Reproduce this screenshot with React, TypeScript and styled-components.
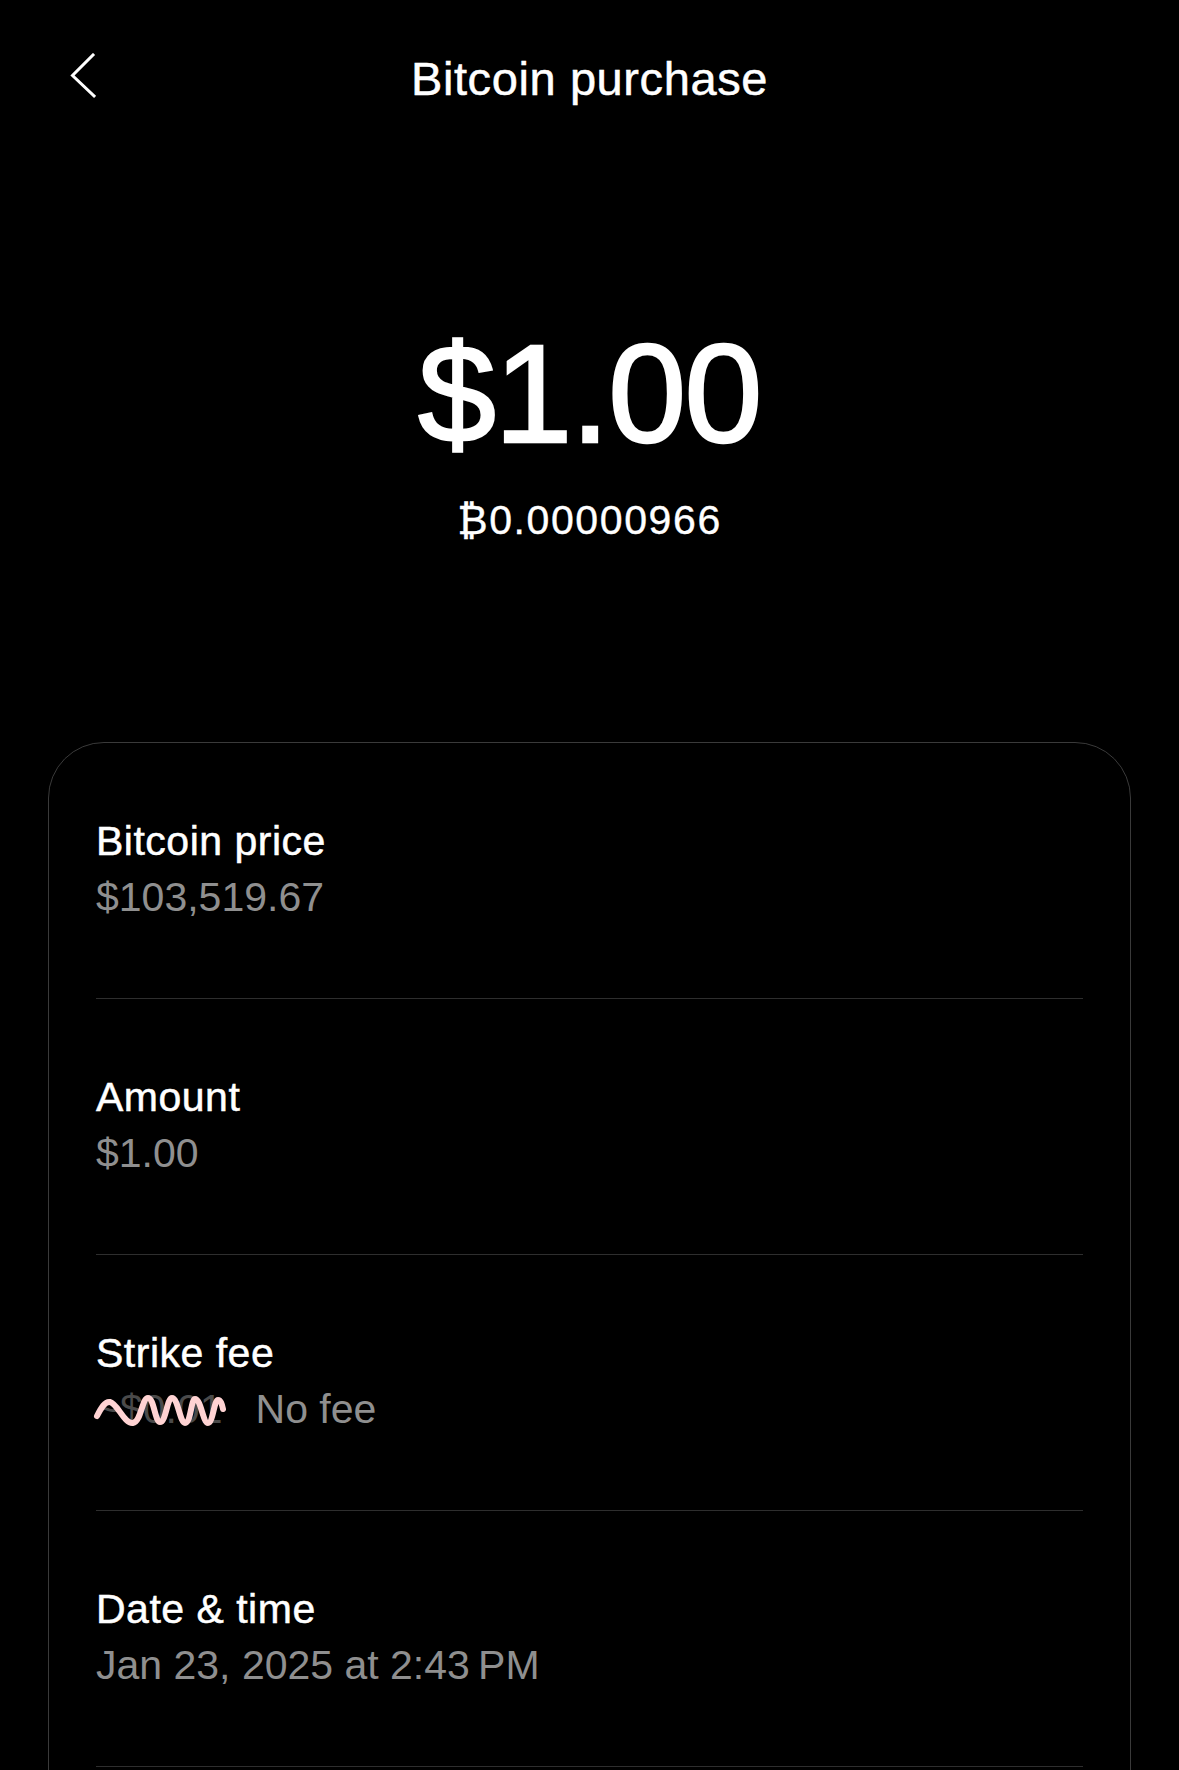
import React from "react";
import styled, { createGlobalStyle } from "styled-components";

const GlobalStyle = createGlobalStyle`
  html, body {
    margin: 0;
    padding: 0;
    background: #000;
  }
  body {
    font-family: "Liberation Sans", "Noto Sans", "DejaVu Sans", Arial, sans-serif;
    color: #fff;
    -webkit-font-smoothing: antialiased;
  }
`;

const Page = styled.div`
  min-height: 100vh;
  background: #000;
  padding: 51px 48px 0;
  box-sizing: border-box;
  overflow: hidden;
`;

const Header = styled.header`
  display: grid;
  grid-template-columns: 1fr auto 1fr;
  align-items: start;
  height: 56px;
`;

const BackButton = styled.button`
  justify-self: start;
  background: none;
  border: 0;
  padding: 0;
  margin: 2px 0 0 22px;
  width: 26px;
  height: 46px;
  display: flex;
  cursor: pointer;
`;

const Title = styled.h1`
  margin: 0;
  font-size: 47px;
  line-height: 56px;
  font-weight: 400;
  letter-spacing: 0.6px;
  color: #fff;
  -webkit-text-stroke: 0.5px #fff;
  white-space: nowrap;
`;

const Hero = styled.section`
  display: flex;
  flex-direction: column;
  align-items: center;
  padding-top: 217px;
  gap: 28px;
`;

const BigAmount = styled.div`
  font-size: 140px;
  line-height: 140px;
  letter-spacing: -1.5px;
  font-weight: 400;
  color: #fff;
  -webkit-text-stroke: 2.5px #fff;
`;

const SubAmount = styled.div`
  font-size: 41px;
  line-height: 56px;
  letter-spacing: 1.6px;
  color: #fff;
  -webkit-text-stroke: 0.4px #fff;
`;

const Card = styled.section`
  margin-top: 194px;
  border: 1px solid #3a3a3a;
  border-radius: 56px;
  padding-bottom: 200px;
`;

const Row = styled.div`
  margin: 0 47px;
  padding: 70px 0 73px;
  border-bottom: 1px solid #2e2e2e;
  display: flex;
  flex-direction: column;
`;

const Label = styled.div`
  font-size: 41px;
  line-height: 56px;
  letter-spacing: 0.5px;
  color: #fff;
  -webkit-text-stroke: 0.5px #fff;
`;

const Value = styled.div`
  font-size: 41px;
  line-height: 56px;
  color: #8f8f8f;
  display: flex;
  align-items: baseline;
  gap: 33px;
`;

const Struck = styled.span`
  position: relative;
  color: #4a4a4a;
`;

const Squiggle = styled.svg`
  position: absolute;
  left: 0;
  top: 15px;
  width: 132px;
  height: 32px;
  overflow: visible;
  pointer-events: none;
`;

function Chevron() {
  return (
    <svg width="26" height="46" viewBox="0 0 26 46" fill="none">
      <path
        d="M23 2 L2.5 22.5 L24 43"
        stroke="#fff"
        strokeWidth="3"
        strokeLinecap="square"
        strokeLinejoin="miter"
      />
    </svg>
  );
}

function StrikeWave() {
  return (
    <Squiggle viewBox="0 0 132 32" aria-hidden="true">
      <path
        d="M1 20 C5 12, 9 5, 14 6 C22 8, 28 28, 37 27 C45 26, 46 2, 52 2 C58 2, 59 26, 64 26 C70 26, 71 2, 76 2 C82 2, 84 27, 89 27 C95 27, 95 3, 99 3 C105 3, 107 27, 112 27 C117 27, 118 4, 122 4 C125 4, 126 9, 127 13"
        stroke="#ffd3d3"
        strokeWidth="6"
        strokeLinecap="round"
        strokeLinejoin="round"
        fill="none"
      />
    </Squiggle>
  );
}

const rows = [
  { label: "Bitcoin price", value: "$103,519.67" },
  { label: "Amount", value: "$1.00" },
  { label: "Strike fee", value: "No fee", struck: "~$0.01" },
  { label: "Date & time", value: "Jan 23, 2025 at 2:43\u2009PM" },
];

export default function App() {
  return (
    <>
      <GlobalStyle />
      <Page>
        <Header>
          <BackButton aria-label="Back">
            <Chevron />
          </BackButton>
          <Title>Bitcoin purchase</Title>
          <span />
        </Header>
        <Hero>
          <BigAmount>$1.00</BigAmount>
          <SubAmount>₿0.00000966</SubAmount>
        </Hero>
        <Card>
          {rows.map((r) => (
            <Row key={r.label}>
              <Label>{r.label}</Label>
              <Value>
                {r.struck && (
                  <Struck>
                    {r.struck}
                    <StrikeWave />
                  </Struck>
                )}
                <span>{r.value}</span>
              </Value>
            </Row>
          ))}
        </Card>
      </Page>
    </>
  );
}
